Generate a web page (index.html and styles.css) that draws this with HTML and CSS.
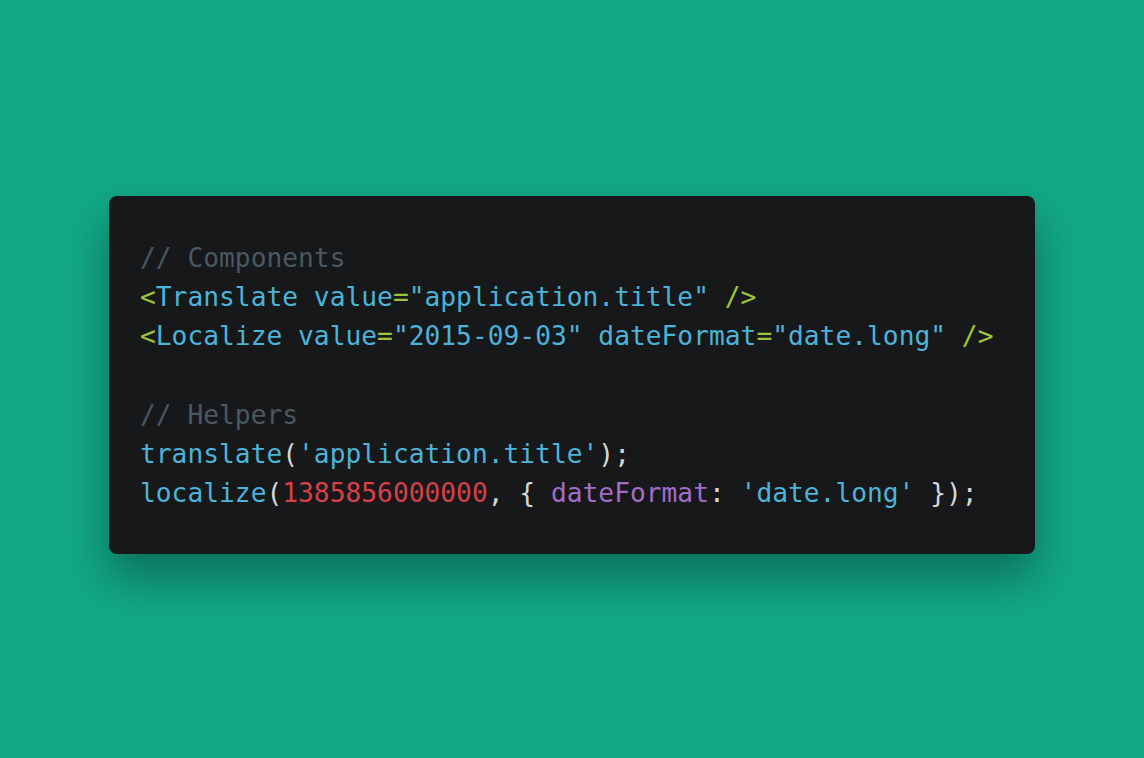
FILE: index.html
```html
<!DOCTYPE html>
<html>
<head>
<meta charset="utf-8">
<link rel="stylesheet" href="styles.css">
</head>
<body>
<main class="stage">
  <pre class="code"><span class="c">// Components</span>
<span class="g">&lt;</span><span class="b">Translate value</span><span class="g">=</span><span class="b">"application.title"</span> <span class="g">/&gt;</span>
<span class="g">&lt;</span><span class="b">Localize value</span><span class="g">=</span><span class="b">"2015-09-03" dateFormat</span><span class="g">=</span><span class="b">"date.long"</span> <span class="g">/&gt;</span>

<span class="c">// Helpers</span>
<span class="b">translate</span><span class="w">(</span><span class="b">'application.title'</span><span class="w">);</span>
<span class="b">localize</span><span class="w">(</span><span class="r">1385856000000</span><span class="w">, { </span><span class="p">dateFormat</span><span class="w">: </span><span class="b">'date.long'</span><span class="w"> });</span></pre>
</main>
</body>
</html>
```

FILE: styles.css
```css
html, body {
  margin: 0;
  padding: 0;
  background: #12a886;
}
.stage {
  height: 758px;
  display: flex;
  justify-content: center;
  align-items: flex-start;
  padding-top: 196px;
  box-sizing: border-box;
}
.code {
  margin: 0;
  width: 926px;
  height: 358px;
  box-sizing: border-box;
  padding: 43px 31px 0 31px;
  background: #17181a;
  border-radius: 8px;
  box-shadow: 0 24px 48px rgba(0, 0, 0, 0.35);
  font-family: "DejaVu Sans Mono", monospace;
  font-size: 26.25px;
  line-height: 39.2px;
  color: #d4d4d4;
  white-space: pre;
}
.c { color: #4a5861; }
.g { color: #9cc63a; }
.b { color: #4cb3d9; }
.w { color: #d6d6d6; }
.r { color: #d8404a; }
.p { color: #a26dc9; }
```
